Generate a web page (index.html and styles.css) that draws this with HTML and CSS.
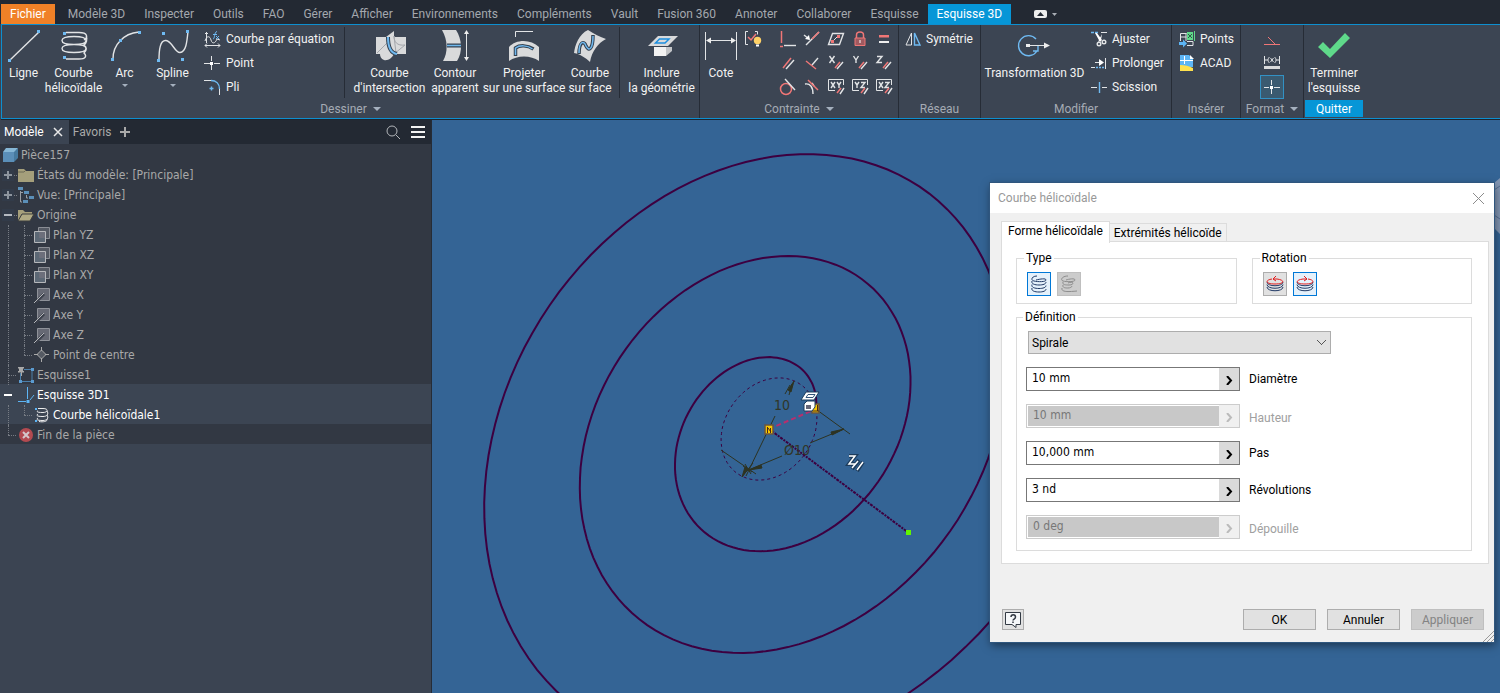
FILE: index.html
```html
<!DOCTYPE html>
<html lang="fr">
<head>
<meta charset="utf-8">
<title>Esquisse 3D</title>
<link rel="stylesheet" href="styles.css">
</head>
<body>
<div class="app">
<nav class="tabs">
<a class="tab file" href="#">Fichier</a><a class="tab" href="#">Modèle 3D</a><a class="tab" href="#">Inspecter</a><a class="tab" href="#">Outils</a><a class="tab" href="#">FAO</a><a class="tab" href="#">Gérer</a><a class="tab" href="#">Afficher</a><a class="tab" href="#">Environnements</a><a class="tab" href="#">Compléments</a><a class="tab" href="#">Vault</a><a class="tab" href="#">Fusion 360</a><a class="tab" href="#">Annoter</a><a class="tab" href="#">Collaborer</a><a class="tab" href="#">Esquisse</a><a class="tab current" href="#">Esquisse 3D</a>
<button class="fold" aria-label="Réduire le ruban"><svg width="24" height="8" viewBox="0 0 24 8"><rect width="13" height="8" rx="2" fill="#eee"/><path d="M3 6l3.500-4 3.500 4z" fill="#232933"/><path d="M18 3h5l-2.500 3z" fill="#a9aeb5"/></svg></button>
</nav>

<section class="ribbon">
<div class="panel draw">
  <div class="body">
    <div class="group g-basic">
      <button class="big"><svg class="i32" viewBox="0 0 32 32"><path d="M2 30L31 2" class="ln"/><path d="M0 29h3v3h-3zM29 0h3v3h-3z" class="pt"/></svg>Ligne</button>
      <button class="big"><svg class="i32" viewBox="0 0 32 32"><path d="M8 2.500h13c9 0 9 5 5 7.500M16 6.500c-7 0-12 1.500-12 4s5 4 12 4 12-1.500 12-4-5-4-12-4zM16 14.500c-7 0-12 1.500-12 4s5 4 12 4 12-1.500 12-4-5-4-12-4zM28 6c2 3 0 8-2 9 3 2 3 5 0 8 3 3 2 6-5 6H8" class="ln"/><path d="M5 2h3v3h-3zM5 26h3v3h-3z" class="pt"/></svg>Courbe<br>hélicoïdale</button>
      <button class="big"><svg class="i32" viewBox="0 0 32 32"><path d="M4 29Q4 18 11 11Q18 3 30 2" class="ln"/><path d="M2 28h3v3h-3zM10 9h3v3h-3zM29 1h3v3h-3z" class="pt"/></svg>Arc<span class="drop"></span></button>
      <button class="big"><svg class="i32" viewBox="0 0 32 32"><path d="M2 30C2 20 3 10 9 10.500S18 23 23 22.500C29 22 30 12 31 1" class="ln"/><path d="M0 29h3v3h-3zM5 2h3v3h-3zM24 28h3v3h-3zM29 0h3v3h-3z" class="pt"/></svg>Spline<span class="drop"></span></button>
      <div class="stack">
        <button class="small"><svg class="i16" viewBox="0 0 16 16"><path d="M2.500 1v11M1 2.500h3M1 14.500h15M3 12.500l-2 2 2 2M14 12.500l2 2-2 2M1 10c2-6 5-5 6-1s4 4 6-1l3 1" class="ln thin"/><path d="M9 8c2 0 1-7 4-7.500M9 3.500h4M12 5l3 3M15 5l-3 3" class="bl thin"/></svg>Courbe par équation</button>
        <button class="small"><svg class="i16" viewBox="0 0 16 16"><path d="M7.500 1v5M7.500 10v5M0 8.500h6M10 8.500h6" class="ln thin"/><path d="M6 7h3v3H6z" fill="#fff"/></svg>Point</button>
        <button class="small"><svg class="i16" viewBox="0 0 16 16"><path d="M0 1.500h7M15.500 10v6" class="ln thin"/><path d="M7 1.500c5 0 8.500 3 8.500 8.500M5.500 9.500h4M7.500 7.500v4" class="bl"/></svg>Pli</button>
      </div>
    </div>
    <div class="group g-surf">
      <button class="big"><svg class="i32" viewBox="0 0 32 32"><path d="M2 7h30v17H20c-2 4-6 7-10 6-3-1-4-4-4-6H2z" fill="#d9dadb"/><path d="M12 7l8-6v6" fill="#d9dadb"/><path d="M3 23L15 11M31 15c-8 1-11-3-11-9l2 17M20 24l11-9" fill="none" stroke="#a3a6ab"/><path d="M14 7c0 8 2 16 9 17" fill="none" stroke="#344150" stroke-width="4"/><path d="M14 7c0 8 2 16 9 17" fill="none" stroke="#6fb8ee" stroke-width="2"/></svg>Courbe<br>d'intersection</button>
      <button class="big"><svg class="i32" viewBox="0 0 32 32"><path d="M3 0h14c6 9 7 22 1 31H4c5-8 5-21-1-31z" fill="#d9dadb"/><path d="M8 15.500h14" stroke="#344150" stroke-width="4"/><path d="M8 15.500h14" stroke="#6fb8ee" stroke-width="1.500"/><path d="M27.500 1v29" class="ln thin"/><path d="M25 4l2.500-4 2.500 4zM25 27l2.500 4 2.500-4z" fill="#eee"/></svg>Contour<br>apparent</button>
      <button class="big"><svg class="i32" viewBox="0 0 32 32"><path d="M7.500 7V1.500H25" class="ln thin"/><path d="M1 17C8 9 23 9 31 17v14c-8-6-22-6-30 0z" fill="#d9dadb"/><path d="M7.500 26v-8c4-3 12-3 18 1" fill="none" stroke="#344150" stroke-width="3.500"/><path d="M7.500 25v-7c4-3 12-3 17 1" fill="none" stroke="#6fb8ee" stroke-width="1.500"/></svg>Projeter<br>sur une surface</button>
      <button class="big"><svg class="i32" viewBox="0 0 32 32"><path d="M14 0c6 4 12 7 18 9-8 4-14 12-16 23C12 28 6 24 0 23 1 15 5 4 14 0z" fill="#d9dadb"/><path d="M5 24c0-12 5-14 7-8 3 6 7 3 7-11" fill="none" stroke="#344150" stroke-width="3.500"/><path d="M5 23c0-12 5-13 7-7 3 6 7 3 7-10" fill="none" stroke="#6fb8ee" stroke-width="1.500"/></svg>Courbe<br>sur face</button>
    </div>
    <div class="group g-incl">
      <button class="big"><svg class="i32" viewBox="0 0 32 32"><path d="M12 6h20L22 16H2z" fill="#d9dadb"/><path d="M13.500 9h9.500l-4 4h-9.500z" fill="none" stroke="#1c8fe0" stroke-width="1.500"/><path d="M8 17h12v9H8z" fill="#f2f2f2"/><path d="M20 17h6v4l-6 5z" fill="#c3c5c8"/></svg>Inclure<br>la géométrie</button>
    </div>
  </div>
  <div class="caption">Dessiner<span class="drop"></span></div>
</div>

<div class="panel constrain">
  <div class="body">
    <button class="big"><svg class="i32" viewBox="0 0 32 32"><path d="M.5 2v28M31.500 2v28M2 10.500h28" class="ln thin"/><path d="M1 10.500l5-3v6zM31 10.500l-5-3v6z" fill="#eee"/></svg>Cote</button>
    <button class="tool"><svg class="i16" viewBox="0 0 16 16"><path d="M3 .5H.5v13H3M10 .5h2.500v3" class="ln thin"/><path d="M3 6l3 3 5-6" class="rd"/><circle cx="12.500" cy="9.500" r="3.700" fill="#ffd166"/><path d="M11 13.500h3v2h-3z" fill="#fff"/></svg></button>
    <div class="matrix">
      <button class="tool"><svg class="i16" viewBox="0 0 16 16"><path d="M1.500 0v12M0 15.500h3" class="rd"/><path d="M4 14.500h12" class="ln"/></svg></button>
      <button class="tool"><svg class="i16" viewBox="0 0 16 16"><path d="M15 1L2 14" class="ln"/><path d="M15 1L8 8" class="rd"/><path d="M0 4l5 4" class="ln"/><path d="M6 9l-1-5-4 4z" fill="#fff"/></svg></button>
      <button class="tool"><svg class="i16" viewBox="0 0 16 16"><path d="M4.500 2.500h11l-4 11h-11z" class="ln"/><path d="M5 10l5-5" class="ln thin"/><path d="M3 9h3v3h-3zM9 4h3v3h-3z" fill="#f07676"/></svg></button>
      <button class="tool"><svg class="i16" viewBox="0 0 16 16"><path d="M4.500 7V4c0-4 7-4 7 0v3" class="rd"/><path d="M3 7h10v7.500H3z" fill="#a05a60" stroke="#f07676"/><path d="M8 9v3" stroke="#fff"/></svg></button>
      <button class="tool"><svg class="i16" viewBox="0 0 16 16"><path d="M3 4h10v2.500H3z" fill="#f07676"/><path d="M3 10h10v2H3z" fill="#eee"/></svg></button>
      <button class="tool"><svg class="i16" viewBox="0 0 16 16"><path d="M3 13L11 3" class="rd"/><path d="M6 14l8-9" class="ln"/></svg></button>
      <button class="tool"><svg class="i16" viewBox="0 0 16 16"><path d="M2 6l10 8" class="rd"/><path d="M8 10l6-7" class="ln"/></svg></button>
      <button class="tool"><svg class="i16" viewBox="0 0 16 16"><path d="M1.500 1l5 7M6.500 1l-5 7M9 14l6-7" class="ln"/><path d="M7 13l5-6" class="rd"/></svg></button>
      <button class="tool"><svg class="i16" viewBox="0 0 16 16"><path d="M1.500 1L4 5l2.500-4M4 5v3M9 14l6-7" class="ln"/><path d="M7 13l5-6" class="rd"/></svg></button>
      <button class="tool"><svg class="i16" viewBox="0 0 16 16"><path d="M1 1.500h5L1 7.500h5M9 14l6-7" class="ln"/><path d="M7 13l5-6" class="rd"/></svg></button>
      <button class="tool"><svg class="i16" viewBox="0 0 16 16"><circle cx="6" cy="10" r="5.500" class="rd"/><path d="M5 0l10 11" class="ln"/></svg></button>
      <button class="tool"><svg class="i16" viewBox="0 0 16 16"><path d="M1 5c5-1 8 3 8 10M8 4l2 3" class="ln"/><path d="M4 1l10 10" class="rd"/></svg></button>
      <button class="tool"><svg class="i16" viewBox="0 0 16 16"><path d="M7 11.500H.5V.5h15V6" class="ln thin"/><path d="M3 3l4 6M7 3L3 9M9 3l2 3 2-3M11 6v3M12 15l4-6" class="ln"/><path d="M9 14l4-5" class="rd"/></svg></button>
      <button class="tool"><svg class="i16" viewBox="0 0 16 16"><path d="M7 11.500H.5V.5h15V6" class="ln thin"/><path d="M3 3l2 3 2-3M5 6v3M9 3.500h4L9 8.500h4M12 15l4-6" class="ln"/><path d="M9 14l4-5" class="rd"/></svg></button>
      <button class="tool"><svg class="i16" viewBox="0 0 16 16"><path d="M7 11.500H.5V.5h15V6" class="ln thin"/><path d="M3 3l4 6M7 3L3 9M9 3.500h4L9 8.500h4M12 15l4-6" class="ln"/><path d="M9 14l4-5" class="rd"/></svg></button>
    </div>
  </div>
  <div class="caption">Contrainte<span class="drop"></span></div>
</div>

<div class="panel pattern">
  <div class="body"><div class="stack"><button class="small"><svg class="i16" viewBox="0 0 16 16"><path d="M6.500 2v12H1z" class="ln thin"/><path d="M9.500 2v12H15z" class="bl"/></svg>Symétrie</button></div></div>
  <div class="caption">Réseau</div>
</div>

<div class="panel modify">
  <div class="body">
    <button class="big"><svg class="i32" viewBox="0 0 32 32"><path d="M17 9A10 10 0 1 0 18 21M19 16v5h-5" class="bl"/><path d="M8 15.500h20" class="ln thin"/><path d="M7 14h4v3H7zM25 12.500l6 3-6 3z" fill="#eee"/></svg>Transformation 3D</button>
    <div class="stack">
      <button class="small"><svg class="i16" viewBox="0 0 16 16"><path d="M0 1.500h8" class="bl" stroke-dasharray="3 1"/><path d="M10 1.500h6" class="ln thin"/><path d="M4 2l2 0 5 7-2 2zM11 3l-1 6-3 2z" fill="#fff"/><circle cx="8" cy="13" r="1.800" class="ln"/><circle cx="13" cy="11" r="1.800" class="ln"/></svg>Ajuster</button>
      <button class="small"><svg class="i16" viewBox="0 0 16 16"><path d="M14.500 3v11M4 7.500h6M0 12.500h4" class="ln thin"/><path d="M8 4l5 3.500L8 11z" fill="#fff"/><path d="M5 12.500h8" class="bl" stroke-dasharray="2 1"/></svg>Prolonger</button>
      <button class="small"><svg class="i16" viewBox="0 0 16 16"><path d="M0 8.500h6M11 8.500h5" class="ln thin"/><path d="M8.500 3v11" class="bl"/></svg>Scission</button>
    </div>
  </div>
  <div class="caption">Modifier</div>
</div>

<div class="panel insert">
  <div class="body"><div class="stack">
    <button class="small"><svg class="i16" viewBox="0 0 16 16"><path d="M1.500 10V2.500h6M1.500 6h6M7 2v8M8 14.500h6v-4H8" class="ln thin"/><path d="M8 1h6v8H8zM15 0h1v10h-1z" fill="#5fd98a"/><path d="M9 3l4 4M13 3L9 7" stroke="#2d5b47"/><path d="M0 11h4V8.500l4 4-4 4V14H0z" fill="#5db5f5"/></svg>Points</button>
    <button class="small"><svg class="i16" viewBox="0 0 16 16"><path d="M1 0h9l4 4v8H1z" fill="#5db5f5"/><path d="M11 0l4 4h-4z" fill="#fff"/><path d="M1 5.500h13M5.500 1v8" stroke="#fff"/><path d="M1 10c5 0 9 1 13 3v3H1z" fill="#ffe14d"/></svg>ACAD</button>
  </div></div>
  <div class="caption">Insérer</div>
</div>

<div class="panel format">
  <div class="body"><div class="stack">
    <button class="tool"><svg class="i16" viewBox="0 0 16 16"><path d="M0 13.500h16M4 6l7 7" class="rd thin"/></svg></button>
    <button class="tool"><svg class="i16" viewBox="0 0 16 16"><path d="M.5 1v8M15.500 1v8M1 5h3M12 5h3M5.500 2c-2 2-2 4 0 6M10.500 2c2 2 2 4 0 6M6.500 3l3 4M9.500 3l-3 4" class="ln thin"/><path d="M0 11h16v3H0z" fill="#d9dadb"/></svg></button>
    <button class="tool pressed"><svg class="i16" viewBox="0 0 16 16"><path d="M7.500 1v5M7.500 10v5M0 8.500h5M10 8.500h6" class="ln thin"/><path d="M6 7h3v3H6z" fill="#fff"/></svg></button>
  </div></div>
  <div class="caption">Format<span class="drop"></span></div>
</div>

<div class="panel finish">
  <div class="body"><button class="big"><svg class="i32" viewBox="0 0 32 32"><path d="M5 12l7 7L27 3l5 5-20 20L0 17z" fill="#5fd98a"/></svg>Terminer<br>l'esquisse</button></div>
  <div class="caption quit">Quitter</div>
</div>
</section>

<main class="work">
<aside class="browser">
  <div class="btabs">
    <button class="btab on">Modèle <svg width="10" height="10" viewBox="0 0 10 10"><path d="M1 1l8 8M9 1L1 9" stroke="#e8e8e8" stroke-width="1.500"/></svg></button>
    <button class="btab">Favoris <svg width="10" height="10" viewBox="0 0 10 10"><path d="M0 5h10M5 0v10" stroke="#a9a9a9" stroke-width="2"/></svg></button>
    <button class="bicon right" aria-label="Rechercher"><svg width="14" height="14" viewBox="0 0 14 14"><circle cx="6" cy="6" r="5" fill="none" stroke="#b3b6ba"/><path d="M10 10l4 4" stroke="#b3b6ba"/></svg></button>
    <button class="bicon" aria-label="Menu"><svg width="14" height="12" viewBox="0 0 14 12"><path d="M0 1h14M0 6h14M0 11h14" stroke="#f2f2f2" stroke-width="2"/></svg></button>
  </div>
  <svg class="defs" aria-hidden="true">
    <symbol id="plan" viewBox="0 0 16 16"><path d="M4.500.5h11v11h-11z" fill="#555a64" stroke="#8b8e95"/><path d="M.5 4.500h11v11H.5z" fill="#5c6875" stroke="#b5b7ba"/><path d="M5 5h6v6H5z" fill="#6c6f7b"/></symbol>
    <symbol id="axe" viewBox="0 0 16 16"><path d="M3.500 1.500h12v12h-12z" fill="#666974" stroke="#8f9299"/><path d="M2 15L10 7" stroke="#3c414c" stroke-width="3"/><path d="M0 16L10 6" stroke="#b5b7ba"/></symbol>
  </svg>
  <ul class="tree">
    <li class="root"><svg class="i16" viewBox="0 0 16 16"><path d="M1 5l3-4h12l-3 4z" fill="#86b7d6"/><path d="M1 5h11v10H1z" fill="#5b8fb8"/><path d="M12 5l4-4v10l-4 4z" fill="#467a9f"/></svg>Pièce157</li>
    <li><i class="rail tee exp plus"></i><svg class="i16" viewBox="0 0 16 16"><path d="M0 2h6l2 2h8v11H0z" fill="#a59f7b"/><path d="M0 5h6l2-2" fill="none" stroke="#6d6a57"/></svg>États du modèle: [Principale]</li>
    <li><i class="rail tee exp plus"></i><svg class="i16" viewBox="0 0 16 16"><path d="M0 0h5v3H0zM6 4h5v3H6zM11 9h5v3h-5zM5 13h5v3H5z" fill="#5b8fb8"/><path d="M2.500 4v11H4M2.500 5.500H5M8.500 8v3H10" fill="none" stroke="#9a9da3"/></svg>Vue: [Principale]</li>
    <li><i class="rail tee exp"></i><svg class="i16" viewBox="0 0 16 16"><path d="M0 3h5l2 2h7v2H4l-4 7z" fill="#a59f7b"/><path d="M4 7h12l-4 7H0z" fill="#b0aa84" stroke="#3b3d3f"/></svg>Origine</li>
    <li><i class="rail line"></i><i class="rail tee"></i><svg class="i16"><use href="#plan"/></svg>Plan YZ</li>
    <li><i class="rail line"></i><i class="rail tee"></i><svg class="i16"><use href="#plan"/></svg>Plan XZ</li>
    <li><i class="rail line"></i><i class="rail tee"></i><svg class="i16"><use href="#plan"/></svg>Plan XY</li>
    <li><i class="rail line"></i><i class="rail tee"></i><svg class="i16"><use href="#axe"/></svg>Axe X</li>
    <li><i class="rail line"></i><i class="rail tee"></i><svg class="i16"><use href="#axe"/></svg>Axe Y</li>
    <li><i class="rail line"></i><i class="rail tee"></i><svg class="i16"><use href="#axe"/></svg>Axe Z</li>
    <li><i class="rail line"></i><i class="rail end"></i><svg class="i16" viewBox="0 0 16 16"><path d="M7.500 3L12 7.500 7.500 12 3 7.500z" fill="#555a63" stroke="#a9a9a9"/><path d="M7.500 0v4M7.500 11v4M0 7.500h4M11 7.500h4" stroke="#a9a9a9"/></svg>Point de centre</li>
    <li><i class="rail tee"></i><svg class="i16" viewBox="0 0 16 16"><path d="M2.500 6v8.500H14V2.500H6" fill="none" stroke="#4c80ab"/><path d="M13 1h3v3h-3zM13 13h3v3h-3zM1 13h3v3H1z" fill="#5b9bd0"/><path d="M0 0h6v1.500H5V4h1v1.500H4V9H3V5.500H0V4h1V1.500H0z" fill="#a9a9a9"/></svg>Esquisse1</li>
    <li class="active"><i class="rail line exp"></i><svg class="i16" viewBox="0 0 16 16"><path d="M9.500 0v12M0 14.500h8M12 13l4-5" fill="none" stroke="#5db5f5"/><path d="M8.500 13h3v3h-3z" fill="#5db5f5"/></svg>Esquisse 3D1</li>
    <li class="active"><i class="rail line"></i><i class="rail end"></i><svg class="i16" viewBox="0 0 16 16"><path d="M4 1.500h5c6 0 5 4 0 4S2 5 4 3.500M13 4c2 3 0 5.500-4 5.500S1 9 4 7M13 8c2 3 0 5.500-4 5.500S1 13 4 11M13 12c1 2-3 3.500-8 2.500" fill="none" stroke="#eee"/><path d="M1 1h2v2H1zM1 13h2v2H1z" fill="#5db5f5"/></svg>Courbe hélicoïdale1</li>
    <li><i class="rail end"></i><svg class="i16" viewBox="0 0 16 16"><circle cx="8" cy="8" r="7" fill="#b34a50"/><path d="M5 5l6 6M11 5l-6 6" stroke="#d5c8cb" stroke-width="2"/></svg>Fin de la pièce</li>
  </ul>
</aside>

<section class="canvas">
  <svg class="scene">
    <g transform="translate(-432 -120)">
      <path d="M1500 178l-6 5v45l6 6z" fill="#8296b4"/><path d="M1494 190l6-4M1494 215l6 4" stroke="#566f93"/>
      <path id="base" class="spin dash"/>
      <path id="spiral" class="spin"/>
      <path d="M769 429L909 533" class="spin axis"/>
      <path d="M817 410l33 24M721 450l35 24M746 476l29-60M746 471l36-15M810 443l34-14" class="dim"/>
      <path d="M794 381l-6 9 3 2zM742 477l3-10 3 2zM844 429l-13 3 1 3zM749 470l13-2-1-3z" class="dimfill"/>
      <path d="M742 477l11-14M790 385l-5 9M792 384l-3 11M745 464l6 10M743 466l9 6" class="dim"/>
      <text x="774" y="410" class="dimtext">10</text>
      <text x="784" y="455" class="dimtext">Ø10</text>
      <path d="M769 429l47-20" class="radius"/>
      <path d="M765 425h8v9h-8z" fill="#f7c600" stroke="#6a5540" stroke-width="1.500"/><path d="M767.500 433v-6M770.500 433v-5M768 428l3 4" fill="none" stroke="#4b2a18"/>
      <path d="M812 404h7v9h-7z" fill="#f7c600" stroke="#6a5540" stroke-width="1.500"/><path d="M817.500 405v6M813 411h6" fill="none" stroke="#4b2a18"/>
      <path d="M806 392h13l-5 8h-13z" fill="#fff" stroke="#1d3c5c"/><path d="M808 394.500h7l-2 3h-7z" stroke="#33547a" fill="none"/>
      <path d="M804 404l3-3h8v6l-3 4h-8z" fill="#fff" stroke="#1d3c5c"/><path d="M806 405h5v4h-5z" fill="#667"/>
      <path d="M849 456h6l-6 8h6M852 469l7-9M857 471l6-9" stroke="#1d3c5c" stroke-width="4" fill="none"/>
      <path d="M849 456h6l-6 8h6M852 468l6-7M857 470l6-8" stroke="#fff" stroke-width="1.500" fill="none"/>
      <path d="M906 530h5v5h-5z" fill="#62f500"/>
    </g>
  </svg>

  <form class="dialog">
    <header class="title"><span>Courbe hélicoïdale</span><button type="button" aria-label="Fermer"><svg width="11" height="11" viewBox="0 0 11 11"><path d="M0 0l11 11M11 0L0 11" stroke="#8c8c8c"/></svg></button></header>
    <div class="dtabs"><button type="button" class="dtab on">Forme hélicoïdale</button><button type="button" class="dtab">Extrémités hélicoïde</button></div>
    <div class="page">
      <div class="pair">
        <fieldset><legend>Type</legend>
          <button type="button" class="pick on"><svg width="18" height="18" viewBox="0 0 18 18"><path d="M7 1C2 1 0 5 4 6s12 1 12-1-6-1-10 0M2 6c-1 3 3 4 7 4s7-1 7-3M2 9.500c-1 3 3 4 7 4s7-1 7-3M2 13c-1 3 3 4 7 4s7-1 7-3" fill="none" stroke="#1f3864"/></svg></button>
          <button type="button" class="pick off" disabled><svg width="18" height="18" viewBox="0 0 18 18"><path d="M8 1C2 1 0 5 3 6s12 1 12-1-6-1-9 0M3 7c-1 3 3 3 6 3s4-1 4-2-3-1-5 0M3 10c-1 3 3 3 5 3s4-1 4-2M2 13c-1 4 5 4 15 3" fill="none" stroke="#8d8d8d"/></svg></button>
        </fieldset>
        <fieldset><legend>Rotation</legend>
          <button type="button" class="pick"><svg width="18" height="18" viewBox="0 0 18 18"><path d="M1 7c0 5 16 5 16 0M1 9.500c0 5 16 5 16 0M1 12c0 5 16 5 16 0" fill="none" stroke="#1f3864"/><path d="M6 4c-7 1-7 5 3 5s10-4 2-5H7M10 1L7 4l3 2" fill="none" stroke="#e21c1c"/></svg></button>
          <button type="button" class="pick on"><svg width="18" height="18" viewBox="0 0 18 18"><path d="M1 7c0 5 16 5 16 0M1 9.500c0 5 16 5 16 0M1 12c0 5 16 5 16 0" fill="none" stroke="#1f3864"/><path d="M12 4c7 1 7 5-3 5s-10-4-2-5h4M8 1l3 3-3 2" fill="none" stroke="#e21c1c"/></svg></button>
        </fieldset>
      </div>
      <fieldset class="defn"><legend>Définition</legend>
        <select aria-label="Définition"><option>Spirale</option></select>
        <div class="row"><span class="field"><input id="f1" value="10 mm"><button type="button" aria-label="Options"><svg width="7" height="9" viewBox="0 0 7 9"><path d="M1 0l4 4.500L1 9" fill="none" stroke="currentColor" stroke-width="2"/></svg></button></span><label for="f1">Diamètre</label></div>
        <div class="row dis"><span class="field"><input id="f2" value="10 mm" disabled><button type="button" disabled aria-label="Options"><svg width="7" height="9" viewBox="0 0 7 9"><path d="M1 0l4 4.500L1 9" fill="none" stroke="currentColor" stroke-width="2"/></svg></button></span><label for="f2">Hauteur</label></div>
        <div class="row"><span class="field"><input id="f3" value="10,000 mm"><button type="button" aria-label="Options"><svg width="7" height="9" viewBox="0 0 7 9"><path d="M1 0l4 4.500L1 9" fill="none" stroke="currentColor" stroke-width="2"/></svg></button></span><label for="f3">Pas</label></div>
        <div class="row"><span class="field"><input id="f4" value="3 nd"><button type="button" aria-label="Options"><svg width="7" height="9" viewBox="0 0 7 9"><path d="M1 0l4 4.500L1 9" fill="none" stroke="currentColor" stroke-width="2"/></svg></button></span><label for="f4">Révolutions</label></div>
        <div class="row dis"><span class="field"><input id="f5" value="0 deg" disabled><button type="button" disabled aria-label="Options"><svg width="7" height="9" viewBox="0 0 7 9"><path d="M1 0l4 4.500L1 9" fill="none" stroke="currentColor" stroke-width="2"/></svg></button></span><label for="f5">Dépouille</label></div>
      </fieldset>
    </div>
    <footer>
      <button type="button" class="help" aria-label="Aide"><svg width="16" height="16" viewBox="0 0 16 16"><path d="M.5.500h15v12H11v3l-4-3H.5z" fill="#f5f7f9" stroke="#333a44"/><path d="M6 5c0-3 4.500-3 4.500 0 0 2-2.500 2-2.500 3.500M8 9.500v1.500" fill="none" stroke="#333a44" stroke-width="1.500"/></svg></button>
      <button type="button" class="cmd">OK</button><button type="button" class="cmd">Annuler</button><button type="button" class="cmd" disabled>Appliquer</button>
    </footer>
    <svg class="grip" width="11" height="11" viewBox="0 0 11 11"><path d="M0 11L11 0M4 11l7-7M8 11l3-3" stroke="#999"/></svg>
  </form>
</section>
</main>
</div>
<script src="spiral.js"></script>
</body>
</html>
```
FILE: styles.css
```css
* { box-sizing: border-box; }
body { margin: 0; font-family: Roboto, sans-serif; font-size: 12px; color: #f2f2f2; background: #3b4452; }
button { font: inherit; color: inherit; background: none; border: 0; padding: 0; margin: 0; }
svg { display: block; flex: none; }
.app { min-height: 100vh; display: flex; flex-direction: column; }

.tabs { display: flex; align-items: stretch; background: #232933; padding: 4px 1px 0; height: 24px; }
.tab { padding: 0 9px 0 10px; line-height: 20px; color: #a4a8ae; text-decoration: none; white-space: nowrap; }
.tab.file { background: #f08127; color: #fff; padding: 0 9px; margin-right: 3px; }
.tab.current { background: #0696d7; color: #fff; padding: 0 9px; }
.fold { margin-left: 23px; }

.ribbon { display: flex; background: #3c4553; border: solid #0d8fd0; border-width: 1px 0 1px 1px; margin-left: 1px; height: 95px; box-shadow: 0 1px #20252d; }
.panel { flex: none; display: flex; flex-direction: column; border-right: 1px solid #262c36; }
.draw { width: 698px; }
.constrain { width: 199px; }
.pattern { width: 82px; }
.modify { width: 191px; }
.insert { width: 69px; }
.format { width: 63px; }
.finish { width: 60px; border: 0; }
.body { display: flex; flex: 1; min-height: 0; }
.caption { height: 18px; line-height: 16px; color: #a5abb4; display: flex; justify-content: center; align-items: center; gap: 6px; }
.caption .drop { margin: 0; }
.quit { background: #0696d7; color: #fff; margin: 0 1px 1px; height: 17px; }
.drop { width: 0; border: solid transparent; border-width: 4px 4px 0; border-top-color: #a5b0be; }
.big .drop { border-width: 3px 3px 0; border-top-color: #a5b0be; margin-top: 3px; }
.group { display: grid; margin: 2px 0; }
.g-basic { grid-template-columns: 43px 57px 45px 51px 146px; }
.g-surf { grid-template-columns: 79px 52px 86px 46px; padding: 0 6px 0 5px; border-left: 1px solid #262c36; }
.g-incl { grid-template-columns: 79px; border-left: 1px solid #262c36; justify-items: center; padding-left: 2px; }
.big { display: flex; flex-direction: column; align-items: center; line-height: 15px; white-space: nowrap; text-align: center; min-width: 0; }
.group .big { padding-top: 3px; }
.body > .big { padding-top: 5px; }
.i32 { width: 32px; height: 32px; margin-bottom: 4px; overflow: visible; }
.i16 { width: 16px; height: 16px; overflow: visible; }
.stack { display: flex; flex-direction: column; padding: 0 4px; }
.body > .stack { padding-top: 2px; }
.small { display: flex; align-items: center; gap: 6px; height: 24px; padding: 0 2px; white-space: nowrap; }
.tool { width: 24px; height: 24px; display: grid; place-items: center; }
.constrain .body { padding-left: 5px; }
.constrain .body > .tool { margin: 2px 11px 0 4px; }
.matrix { display: grid; grid-template-columns: repeat(5, 24px); align-content: start; padding-top: 2px; }
.modify .big { width: 107px; }
.modify .stack { padding: 2px 0 0 1px; }
.modify .small, .insert .small, .pattern .small { gap: 5px; }
.insert .stack { padding-left: 5px; }
.format .stack { padding: 2px 19px 0; }
.pressed { background: #3a5a70; box-shadow: inset 0 0 0 1px #3291c4; }
.finish .big { flex: 1; }
.ln { fill: none; stroke: #e2e4e6; stroke-width: 1.4; }
.bl { fill: none; stroke: #6fbaf2; stroke-width: 1.4; }
.rd { fill: none; stroke: #f07676; stroke-width: 1.5; }
.thin { stroke-width: 1; }
.pt { fill: #6fbaf2; }

.work { display: flex; flex: 1; margin-top: 1px; }
.browser { width: 432px; flex: none; border-right: 1px solid #262c36; background: #3b4452; color: #a9a9a9; font-family: "DejaVu Sans Condensed", "DejaVu Sans", sans-serif; }
.btabs { display: flex; height: 24px; background: #232933; padding-right: 1px; }
.btab { display: flex; align-items: center; gap: 9px; padding: 0 6px 0 4px; color: #a9a9a9; font-family: Roboto, sans-serif; }
.btab.on { background: #3b4452; color: #fff; }
.bicon { display: grid; place-items: center; width: 25px; }
.right { margin-left: auto; }
.defs { position: absolute; width: 0; height: 0; }
.tree { list-style: none; margin: 0; padding: 0; }
.tree li { display: flex; align-items: center; height: 20px; line-height: 20px; padding-top: 1px; background: #323843; white-space: pre; }
.tree li .i16 { margin: 0 3px 0 2px; }
.tree .active { background: #3c4553; color: #fff; }
.rail { flex: none; width: 16px; height: 20px; position: relative; }
.rail::before { content: ""; position: absolute; left: 8px; top: 0; height: 100%; border-left: 1px dotted #777c84; }
.rail.end::before { height: 50%; }
.rail.tee::after, .rail.end::after { content: ""; position: absolute; left: 8px; width: 8px; top: 10px; border-top: 1px dotted #777c84; }
.rail.exp::before { background: linear-gradient(#b4b9c0, #b4b9c0) center / 8px 2px no-repeat #323b49; border: 0; left: 2px; top: 4px; width: 12px; height: 12px; }
.rail.plus::before { background: linear-gradient(#8e959e, #8e959e) center / 8px 2px no-repeat, linear-gradient(#8e959e, #8e959e) center / 2px 8px no-repeat, #323b49; }
.rail.exp.tee::after { left: 14px; width: 3px; }
.active .rail.exp::before { background: linear-gradient(#fff, #fff) center / 8px 2px no-repeat; }

.canvas { flex: 1; position: relative; overflow: hidden; background: #346495; }
.scene { position: absolute; inset: 0; width: 100%; height: 100%; }
.spin { fill: none; stroke: #3d0040; stroke-width: 2; }
.dash { stroke-width: 1; stroke-dasharray: 3 3; }
.axis { stroke-dasharray: 3 1 2 1; }
.dim { fill: none; stroke: #2d3322; stroke-width: 1; }
.dimfill { fill: #2d3322; stroke: #2d3322; stroke-width: 1; }
.dimtext { font: 14px "DejaVu Sans Condensed", "DejaVu Sans", sans-serif; fill: #303628; }
.radius { stroke: #b52f6e; stroke-width: 2; stroke-dasharray: 5 3; }

.dialog { position: absolute; top: 63px; right: 6px; width: 504px; background: #f0f0f0; color: #000; outline: 1px solid #2f567e; box-shadow: 1px 3px 9px rgba(0, 0, 0, .5); font-family: Roboto, sans-serif; }
.title { display: flex; justify-content: space-between; align-items: center; height: 30px; background: #fff; color: #999; padding: 0 10px 0 8px; }
.dtabs { display: flex; align-items: flex-end; padding: 7px 11px 0; height: 29px; }
.dtab { height: 19px; border: 1px solid #dcdcdc; border-width: 1px 1px 0 0; padding: 0 4px; }
.dtab.on { height: 22px; background: #fff; border-left-width: 1px; padding: 0 6px 3px; margin-bottom: -1px; position: relative; }
.page { margin: -1px 5px 0 11px; border: 1px solid #dcdcdc; background: #fff; padding: 9px 16px 12px 14px; }
fieldset { border: 1px solid #dcdcdc; margin: 0; padding: 6px 10px; min-width: 0; }
legend { padding: 0 2px; margin-left: -3px; line-height: 15px; }
.pair { display: grid; grid-template-columns: 1fr 1fr; gap: 15px; margin-bottom: 6px; }
.pair fieldset { height: 53px; }
.pick { width: 24px; height: 24px; border: 1px solid #adadad; background: #e1e1e1; margin-right: 6px; float: left; display: grid; place-items: center; }
.pick.on { background: #e5f1fb; border-color: #0078d7; }
.pick.off { background: #ccc; border-color: #bfbfbf; }
.defn { display: flex; flex-direction: column; gap: 13px; padding: 6px 9px 11px; }
select { appearance: none; width: 303px; height: 23px; margin-left: 2px; border: 1px solid #adadad; padding: 0 3px; color: #000; font: 12px Roboto, sans-serif; background: linear-gradient(45deg, transparent 44%, #555 44% 56%, transparent 56%) right 8px center / 5px 5px no-repeat, linear-gradient(-45deg, transparent 44%, #555 44% 56%, transparent 56%) right 4px center / 5px 5px no-repeat, #e1e1e1; border-radius: 0; }
.row { display: flex; align-items: center; gap: 9px; }
.field { display: flex; width: 214px; height: 24px; border: 1px solid #777; }
.field input { flex: 1; min-width: 0; border: 0; padding: 0 5px 3px; font: 12px "DejaVu Sans Condensed", "DejaVu Sans", sans-serif; background: #fff; color: #000; }
.field button { width: 20px; background: #dadada; display: grid; place-items: center; padding-top: 2px; }
.dis .field { border-color: #ccc; }
.dis input { background: #c8c8c8; color: #777; border: solid #fff; border-width: 1px 0 1px 1px; }
.dis button { background: #f0f0f0; color: #bbb; }
.dis label { color: #a0a0a0; padding-top: 3px; }
footer { display: flex; gap: 11px; padding: 45px 10px 12px 12px; }
footer button { border: 1px solid #adadad; background: #e1e1e1; height: 21px; }
.help { width: 22px; display: grid; place-items: center; margin-right: auto; }
.cmd { width: 73px; }
.cmd:disabled { background: #ccc; border-color: #bfbfbf; color: #838383; }
.grip { position: absolute; right: 0; bottom: 0; }
```
FILE: spiral.js
```js
// Archimedean spiral seen in an oblique view: u and v are the projected radius vectors.
const centre = [769, 429], u = [47, -20], v = [-9.2, -47];

function curve(turns, radius) {
  const steps = Math.ceil(turns * 120);
  const pts = [];
  for (let i = 0; i <= steps; i++) {
    const a = i / steps * turns * 2 * Math.PI, r = radius(a), c = r * Math.cos(a), s = r * Math.sin(a);
    pts.push((centre[0] + c * u[0] + s * v[0]).toFixed(1) + " " + (centre[1] + c * u[1] + s * v[1]).toFixed(1));
  }
  return "M" + pts.join("L");
}

document.getElementById("base").setAttribute("d", curve(1, () => 1));
document.getElementById("spiral").setAttribute("d", curve(3, a => 1 + a / Math.PI));
```
